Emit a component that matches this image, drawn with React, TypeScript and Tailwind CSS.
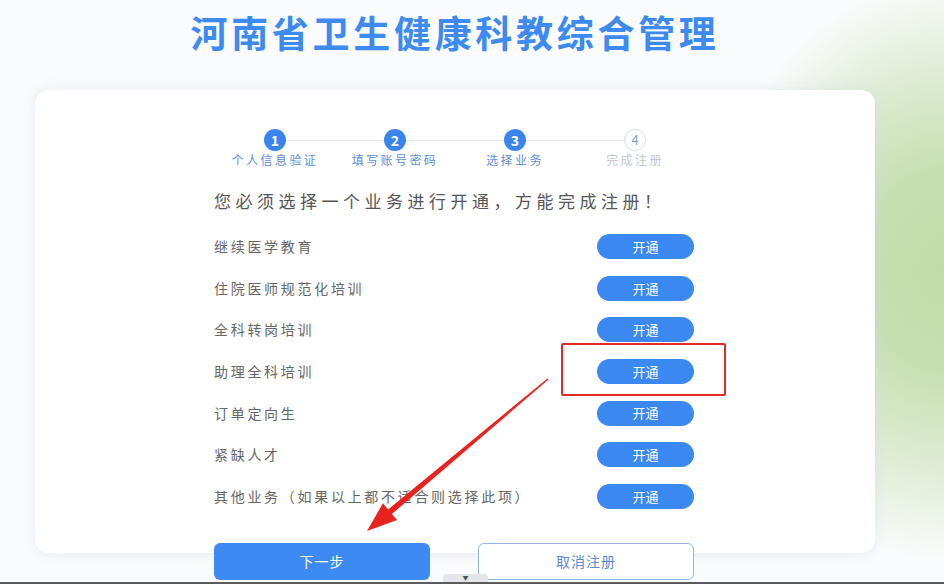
const steps = [
  { n: 1, label: "个人信息验证", done: true },
  { n: 2, label: "填写账号密码", done: true },
  { n: 3, label: "选择业务", done: true },
  { n: 4, label: "完成注册", done: false },
];

const services = [
  "继续医学教育",
  "住院医师规范化培训",
  "全科转岗培训",
  "助理全科培训",
  "订单定向生",
  "紧缺人才",
  "其他业务（如果以上都不适合则选择此项）",
];

const App = () => {
  return (
    <div
      className="relative w-[944px] h-[587px] overflow-hidden flex flex-col bg-[#fafbfc] bg-[radial-gradient(ellipse_230px_290px_at_100%_46%,#c0dba8_0%,#c7e0b3_35%,#dcebd0_65%,rgba(250,251,252,0)_100%)]"
      style={{ fontFamily: '"Noto Sans CJK SC", "Noto Sans", sans-serif' }}
    >
      <div className="ml-[35px] w-[840px] flex flex-col">
        {/* Title */}
        <h1 className="mt-[10px] text-center text-[37px] leading-[44px] font-bold tracking-[3.7px] text-[#3d8bf0]">
          河南省卫生健康科教综合管理
        </h1>

        {/* Card */}
        <div className="mt-[36px] h-[463px] rounded-[14px] bg-white shadow-[0_0_14px_rgba(205,214,232,0.45)] flex flex-col">
          {/* Steps */}
          <div className="pt-[39px] flex flex-col items-center">
            <div className="flex items-center">
              {steps.map((s, i) => (
                <div key={s.n} className="flex items-center">
                  <div
                    className={
                      s.done
                        ? "w-[22px] h-[22px] rounded-full bg-[#3a86ee] text-white text-[14px] font-semibold flex items-center justify-center"
                        : "w-[22px] h-[22px] rounded-full bg-white border border-[#d3def0] text-[#7d9fd4] text-[13px] flex items-center justify-center"
                    }
                  >
                    {s.n}
                  </div>
                  {i < steps.length - 1 && <div className="w-[98px] h-px bg-[#e1e8f4]" />}
                </div>
              ))}
            </div>
            <div className="mt-[2px] flex">
              {steps.map((s) => (
                <div
                  key={s.n}
                  className={`w-[120px] text-center text-[12px] leading-[14px] tracking-[2.4px] ${
                    s.done ? "text-[#5b8fd8]" : "text-[#c0c6cf]"
                  }`}
                >
                  {s.label}
                </div>
              ))}
            </div>
          </div>

          {/* Content */}
          <div className="pl-[179px] pr-[181px] flex flex-col">
            <p className="mt-[22px] text-[17px] leading-[24px] tracking-[4.5px] text-[#555]">
              您必须选择一个业务进行开通，方能完成注册！
            </p>

            <div className="mt-[13px] flex flex-col">
              {services.map((name) => (
                <div key={name} className="h-[41.6px] flex items-center justify-between">
                  <span className="text-[14px] tracking-[2.7px] text-[#666]">{name}</span>
                  <button className="w-[97px] h-[25px] rounded-full bg-[#3b88f0] text-white text-[13px]">
                    开通
                  </button>
                </div>
              ))}
            </div>

            <div className="mt-[26px] flex justify-between">
              <button className="w-[216px] h-[37px] rounded-[6px] bg-[#3d8bf2] text-white text-[14px] tracking-[1px]">
                下一步
              </button>
              <button className="w-[216px] h-[37px] rounded-[6px] bg-white border border-[#93b6e8] text-[#5a88cf] text-[14px] tracking-[1px]">
                取消注册
              </button>
            </div>
          </div>
        </div>
      </div>

      {/* Bottom browser bar */}
      <div className="mt-auto h-[5px] flex flex-col">
        <div className="h-[2px] bg-[#5b5b5b]" />
        <div className="h-[3px] bg-white" />
      </div>
      <div className="absolute left-[443px] bottom-[5px] w-[45px] h-[8px] rounded-t-[4px] bg-[#e4e6ea] flex items-center justify-center text-[6px] leading-none text-[#555]">
        ▼
      </div>

      {/* Annotation: red box */}
      <div className="absolute left-[561px] top-[343px] w-[165px] h-[53px] border-2 border-[#e42a25] rounded-[2px]" />

      {/* Annotation: red arrow */}
      <svg className="absolute left-0 top-0" width="944" height="587" viewBox="0 0 944 587">
        <polygon
          points="547.5,378.4 388.1,509.4 382.9,503.3 367,531 397.1,520.1 391.9,514 548.5,379.6"
          fill="#e8231f"
        />
      </svg>
    </div>
  );
};

export default App;
